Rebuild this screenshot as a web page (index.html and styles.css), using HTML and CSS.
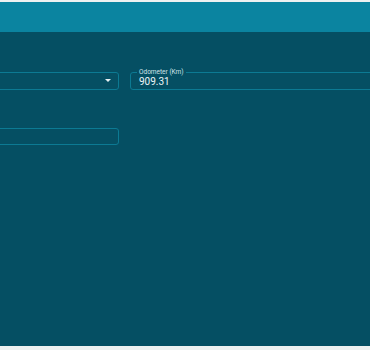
FILE: index.html
```html
<!DOCTYPE html>
<html lang="en">
<head>
  <meta charset="UTF-8" />
  <meta name="viewport" content="width=device-width, initial-scale=1.0"/>
  <title>Vehicle Details</title>
  <link rel="stylesheet" href="styles.css">
</head>
<body>

  <div class="topline"></div>

  <div class="appbar"></div>

  <div class="content">
    <div class="form-grid">
      <div class="field select-field">
        <span class="arrow"></span>
      </div>
      <div class="field">
        <label>Odometer (Km)</label>
        <span class="value">909.31</span>
      </div>
      <div class="field short"></div>
    </div>
  </div>

  <div class="bottomline"></div>

</body>
</html>
```

FILE: styles.css
```css
body {
  margin: 0;
  font-family: Roboto, 'Liberation Sans', sans-serif;
  background: #eef1f1;
  overflow: hidden;
  width: 370px;
  height: 350px;
}

.topline {
  height: 2px;
  background: #eef1f1;
}

.appbar {
  height: 30px;
  background: #0b84a0;
}

.content {
  height: 314px;
  background: #054f63;
  overflow: hidden;
  padding-top: 40px;
  box-sizing: border-box;
}

.form-grid {
  display: grid;
  grid-template-columns: 249px 249px;
  column-gap: 11px;
  row-gap: 38px;
  margin-left: -130px;
}

.field {
  position: relative;
  height: 18px;
  border: 1px solid #0c7a93;
  border-radius: 3px;
  box-sizing: border-box;
  display: flex;
  align-items: center;
  padding-left: 8px;
}

.field.short {
  height: 17px;
}

.field label {
  position: absolute;
  top: -5px;
  left: 6px;
  padding: 0 2px;
  background: #054f63;
  color: #cfe3e8;
  font-size: 6.5px;
  line-height: 8px;
}

.value {
  color: #eef5f7;
  font-size: 10px;
  padding-top: 1px;
}

.arrow {
  position: absolute;
  right: 7px;
  top: 6px;
  width: 0;
  height: 0;
  border-left: 3px solid transparent;
  border-right: 3px solid transparent;
  border-top: 3px solid #e8f1f3;
}

.bottomline {
  height: 4px;
  background: #eef1f1;
}
```
